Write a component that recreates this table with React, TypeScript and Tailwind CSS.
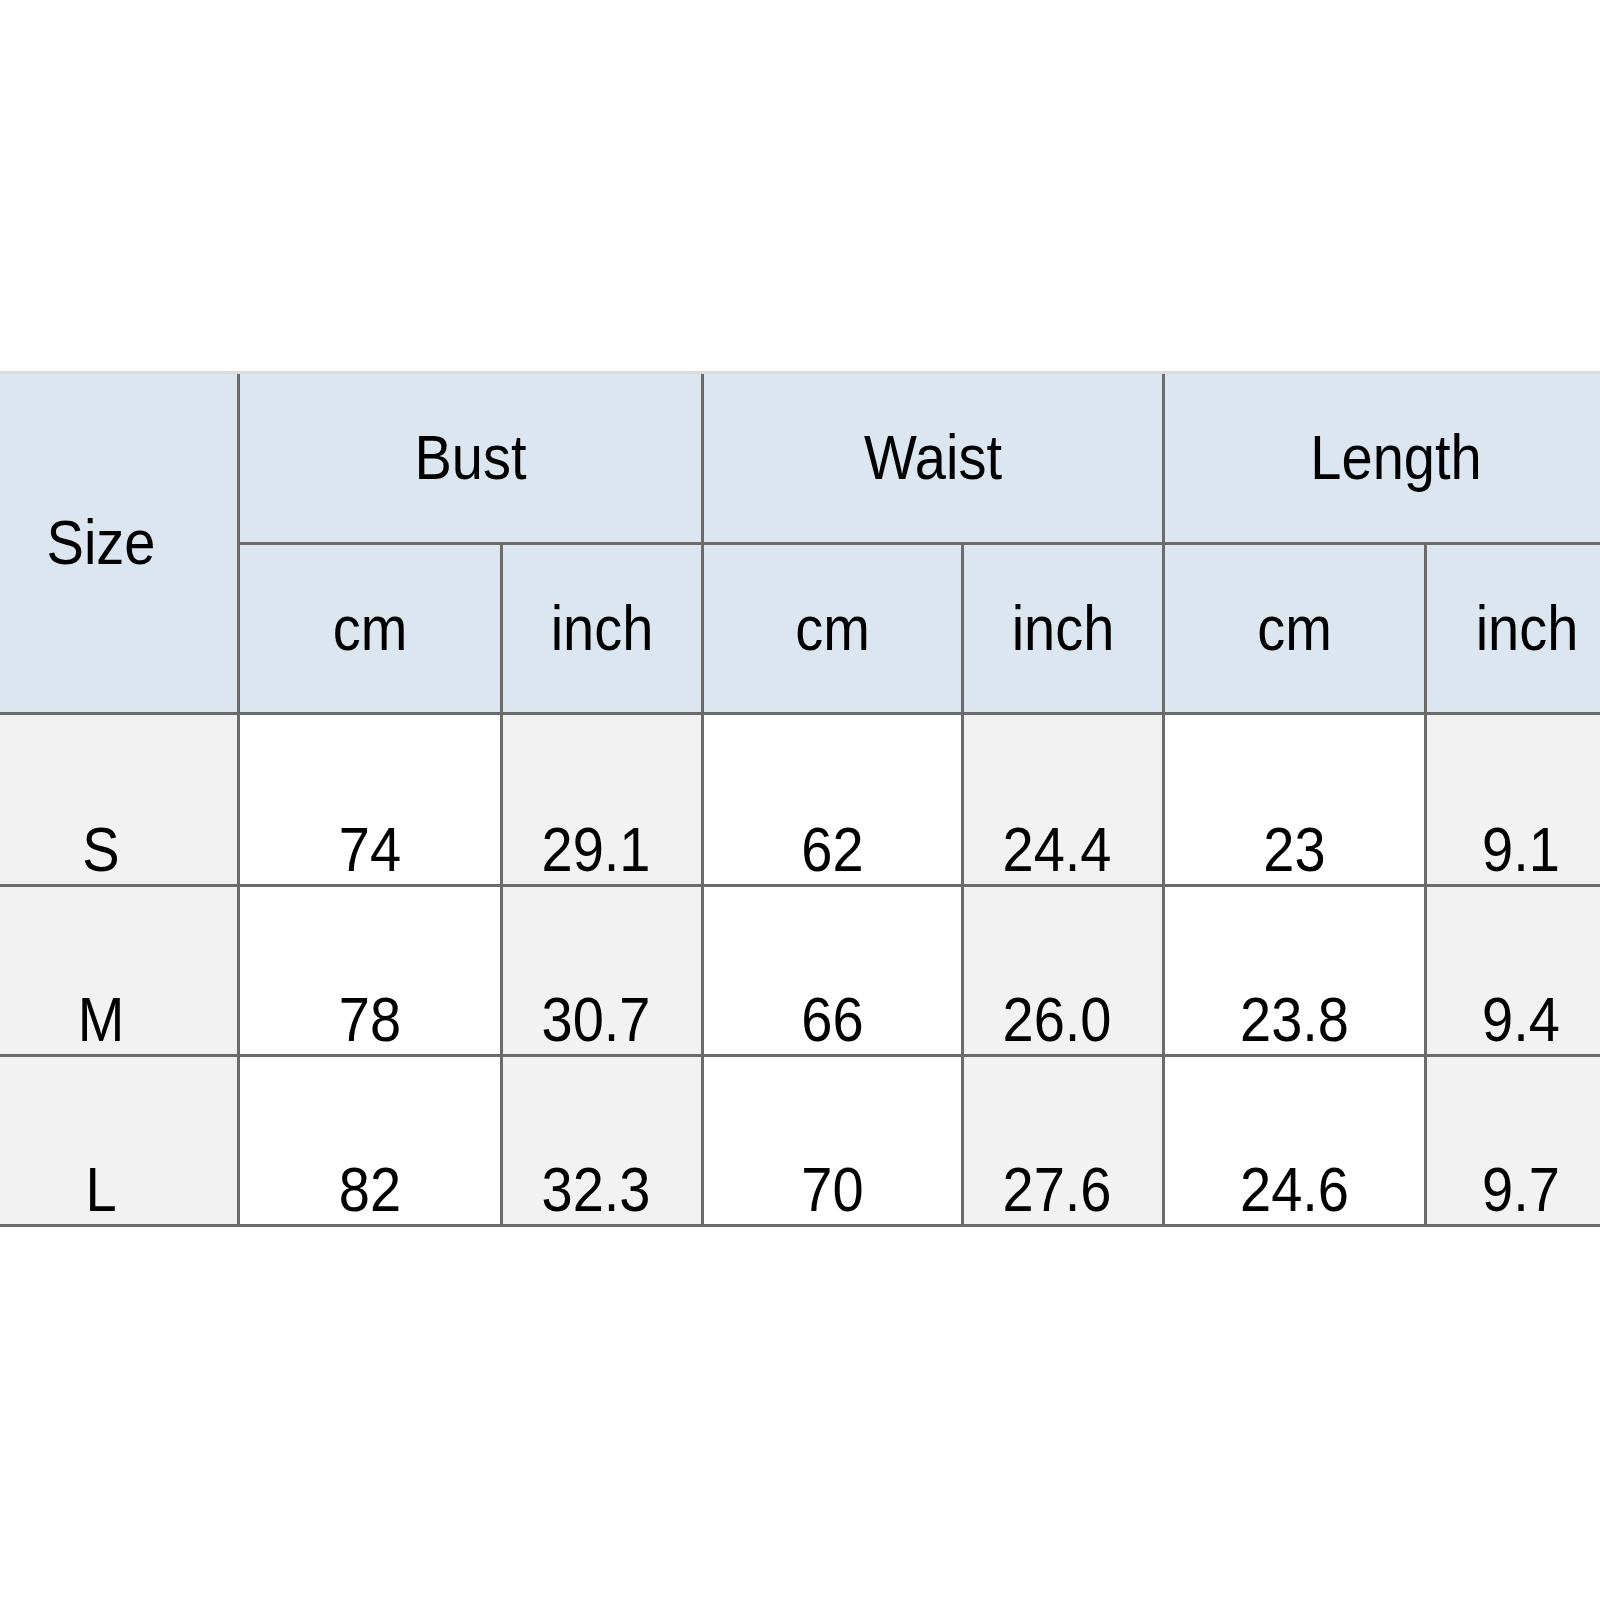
const rows = [
  { size: 'S', vals: ['74', '29.1', '62', '24.4', '23', '9.1'] },
  { size: 'M', vals: ['78', '30.7', '66', '26.0', '23.8', '9.4'] },
  { size: 'L', vals: ['82', '32.3', '70', '27.6', '24.6', '9.7'] },
];

const groups = ['Bust', 'Waist', 'Length'];

function Txt({ children }: { children: React.ReactNode }) {
  return <span className="inline-block scale-y-[1.12] leading-none">{children}</span>;
}

export default function App() {
  return (
    <div className="w-[1600px] h-[1600px] overflow-hidden bg-white pt-[371px] font-['Liberation_Sans',Arial,sans-serif] text-[56px] text-black">
      <div className="-ml-[35px] w-[1700px] border-t-[3px] border-[#dcdcdc]">
        <div className="grid grid-cols-[272px_260px_198px_257px_198px_259px_200px_30px] grid-rows-[168px_167px_169px_167px_167px] gap-[3px] bg-[#6b6b6b] pb-[3px] w-fit">
          {/* header */}
          <div className="row-span-2 flex items-center justify-center bg-[#dce6f1]">
            <Txt>Size</Txt>
          </div>
          {groups.map((g) => (
            <div key={g} className="col-span-2 flex items-center justify-center bg-[#dce6f1]">
              <Txt>{g}</Txt>
            </div>
          ))}
          <div className="row-span-2 bg-[#dce6f1]" />
          {groups.map((g) => (
            <div key={g + '-units'} className="contents">
              <div className="flex items-center justify-center bg-[#dce6f1]">
                <Txt>cm</Txt>
              </div>
              <div className="flex items-center justify-center bg-[#dce6f1]">
                <Txt>inch</Txt>
              </div>
            </div>
          ))}

          {/* body */}
          {rows.map((r) => (
            <div key={r.size} className="contents">
              <div className="flex items-end justify-center bg-[#f2f2f2] pb-[6px]">
                <Txt>{r.size}</Txt>
              </div>
              {r.vals.map((v, i) =>
                i % 2 === 0 ? (
                  <div key={i} className="flex items-end justify-center bg-white pb-[6px]">
                    <Txt>{v}</Txt>
                  </div>
                ) : (
                  <div key={i} className="flex items-end justify-center bg-[#f2f2f2] pb-[6px] pr-[12px]">
                    <Txt>{v}</Txt>
                  </div>
                )
              )}
              <div className="bg-white" />
            </div>
          ))}
        </div>
      </div>
    </div>
  );
}
